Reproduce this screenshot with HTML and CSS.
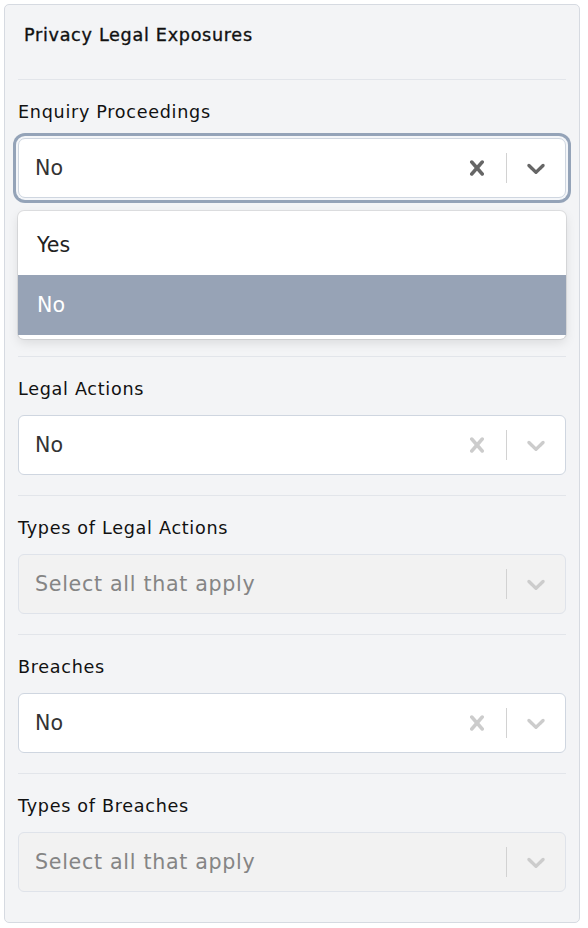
FILE: index.html
```html
<!DOCTYPE html>
<html lang="en">
<head>
<meta charset="utf-8">
<title>Privacy Legal Exposures</title>
<link rel="stylesheet" href="styles.css">
</head>
<body>
<div class="card">
  <div class="card-header">Privacy Legal Exposures</div>

  <div class="field field--open">
    <div class="label">Enquiry Proceedings</div>
    <div class="select select--focused">
      <div class="value">No</div>
      <div class="indicators">
        <span class="ind"><svg viewBox="0 0 20 20" class="icon"><path d="M14.348 14.849c-0.469 0.469-1.229 0.469-1.697 0l-2.651-3.030-2.651 3.029c-0.469 0.469-1.229 0.469-1.697 0-0.469-0.469-0.469-1.229 0-1.697l2.758-3.15-2.759-3.152c-0.469-0.469-0.469-1.228 0-1.697s1.228-0.469 1.697 0l2.652 3.031 2.651-3.031c0.469-0.469 1.228-0.469 1.697 0s0.469 1.229 0 1.697l-2.758 3.152 2.758 3.150c0.469 0.469 0.469 1.229 0 1.698z"/></svg></span>
        <span class="sep"></span>
        <span class="ind"><svg viewBox="0 0 20 20" class="icon"><path d="M4.516 7.548c0.436-0.446 1.043-0.481 1.576 0l3.908 3.747 3.908-3.747c0.533-0.481 1.141-0.446 1.574 0 0.436 0.445 0.408 1.197 0 1.615-0.406 0.418-4.695 4.502-4.695 4.502-0.217 0.223-0.502 0.335-0.787 0.335s-0.57-0.112-0.789-0.335c0 0-4.287-4.084-4.695-4.502s-0.436-1.170 0-1.615z"/></svg></span>
      </div>
    </div>
    <div class="menu">
      <div class="option">Yes</div>
      <div class="option option--selected">No</div>
    </div>
  </div>

  <div class="field">
    <div class="label">Legal Actions</div>
    <div class="select">
      <div class="value">No</div>
      <div class="indicators">
        <span class="ind"><svg viewBox="0 0 20 20" class="icon"><path d="M14.348 14.849c-0.469 0.469-1.229 0.469-1.697 0l-2.651-3.030-2.651 3.029c-0.469 0.469-1.229 0.469-1.697 0-0.469-0.469-0.469-1.229 0-1.697l2.758-3.15-2.759-3.152c-0.469-0.469-0.469-1.228 0-1.697s1.228-0.469 1.697 0l2.652 3.031 2.651-3.031c0.469-0.469 1.228-0.469 1.697 0s0.469 1.229 0 1.697l-2.758 3.152 2.758 3.150c0.469 0.469 0.469 1.229 0 1.698z"/></svg></span>
        <span class="sep"></span>
        <span class="ind"><svg viewBox="0 0 20 20" class="icon"><path d="M4.516 7.548c0.436-0.446 1.043-0.481 1.576 0l3.908 3.747 3.908-3.747c0.533-0.481 1.141-0.446 1.574 0 0.436 0.445 0.408 1.197 0 1.615-0.406 0.418-4.695 4.502-4.695 4.502-0.217 0.223-0.502 0.335-0.787 0.335s-0.57-0.112-0.789-0.335c0 0-4.287-4.084-4.695-4.502s-0.436-1.170 0-1.615z"/></svg></span>
      </div>
    </div>
  </div>

  <div class="field">
    <div class="label">Types of Legal Actions</div>
    <div class="select select--disabled">
      <div class="value placeholder">Select all that apply</div>
      <div class="indicators">
        <span class="sep"></span>
        <span class="ind"><svg viewBox="0 0 20 20" class="icon"><path d="M4.516 7.548c0.436-0.446 1.043-0.481 1.576 0l3.908 3.747 3.908-3.747c0.533-0.481 1.141-0.446 1.574 0 0.436 0.445 0.408 1.197 0 1.615-0.406 0.418-4.695 4.502-4.695 4.502-0.217 0.223-0.502 0.335-0.787 0.335s-0.57-0.112-0.789-0.335c0 0-4.287-4.084-4.695-4.502s-0.436-1.170 0-1.615z"/></svg></span>
      </div>
    </div>
  </div>

  <div class="field">
    <div class="label">Breaches</div>
    <div class="select">
      <div class="value">No</div>
      <div class="indicators">
        <span class="ind"><svg viewBox="0 0 20 20" class="icon"><path d="M14.348 14.849c-0.469 0.469-1.229 0.469-1.697 0l-2.651-3.030-2.651 3.029c-0.469 0.469-1.229 0.469-1.697 0-0.469-0.469-0.469-1.229 0-1.697l2.758-3.15-2.759-3.152c-0.469-0.469-0.469-1.228 0-1.697s1.228-0.469 1.697 0l2.652 3.031 2.651-3.031c0.469-0.469 1.228-0.469 1.697 0s0.469 1.229 0 1.697l-2.758 3.152 2.758 3.150c0.469 0.469 0.469 1.229 0 1.698z"/></svg></span>
        <span class="sep"></span>
        <span class="ind"><svg viewBox="0 0 20 20" class="icon"><path d="M4.516 7.548c0.436-0.446 1.043-0.481 1.576 0l3.908 3.747 3.908-3.747c0.533-0.481 1.141-0.446 1.574 0 0.436 0.445 0.408 1.197 0 1.615-0.406 0.418-4.695 4.502-4.695 4.502-0.217 0.223-0.502 0.335-0.787 0.335s-0.57-0.112-0.789-0.335c0 0-4.287-4.084-4.695-4.502s-0.436-1.170 0-1.615z"/></svg></span>
      </div>
    </div>
  </div>

  <div class="field field--last">
    <div class="label">Types of Breaches</div>
    <div class="select select--disabled">
      <div class="value placeholder">Select all that apply</div>
      <div class="indicators">
        <span class="sep"></span>
        <span class="ind"><svg viewBox="0 0 20 20" class="icon"><path d="M4.516 7.548c0.436-0.446 1.043-0.481 1.576 0l3.908 3.747 3.908-3.747c0.533-0.481 1.141-0.446 1.574 0 0.436 0.445 0.408 1.197 0 1.615-0.406 0.418-4.695 4.502-4.695 4.502-0.217 0.223-0.502 0.335-0.787 0.335s-0.57-0.112-0.789-0.335c0 0-4.287-4.084-4.695-4.502s-0.436-1.170 0-1.615z"/></svg></span>
      </div>
    </div>
  </div>
</div>
</body>
</html>
```

FILE: styles.css
```css
* { box-sizing: border-box; }

html, body {
  margin: 0;
  padding: 0;
  background: #ffffff;
}

body {
  font-family: "DejaVu Sans", "Open Sans", sans-serif;
  color: #111111;
}

.card {
  margin: 4px 8px 0 4px;
  width: 576px;
  height: 919px;
  background: #f3f4f6;
  border: 1px solid #d6dae1;
  border-radius: 5px;
  padding: 0 13px;
}

.card-header {
  padding: 17px 6px 31px;
  font-size: 17.6px;
  line-height: 26px;
  font-weight: 400;
  letter-spacing: 0.7px;
  -webkit-text-stroke: 0.35px #111;
  color: #111;
  border-bottom: 1px solid #e2e5ea;
}

.field {
  padding: 19px 0 20px;
  border-bottom: 1px solid #e2e5ea;
}

.field--open { padding-bottom: 17px; }

.field--last {
  border-bottom: none;
}

.label {
  font-size: 17.6px;
  line-height: 26px;
  letter-spacing: 0.7px;
  margin-bottom: 13px;
  color: #111;
}

.select {
  height: 60px;
  background: #ffffff;
  border: 1px solid #cfd6e0;
  border-radius: 6px;
  display: flex;
  align-items: center;
}

.select--focused {
  box-shadow: 0 0 0 2px #f4f6f9, 0 0 0 5px #94a3b8;
  border-radius: 7px;
}

.select--disabled {
  background: #f2f2f2;
  border-color: #dfe3ea;
}

.value {
  flex: 1;
  padding-left: 16px;
  font-size: 20.6px;
  color: #333333;
}

.placeholder {
  color: #858585;
  letter-spacing: 0.7px;
}

.indicators {
  display: flex;
  align-items: center;
  align-self: stretch;
}

.ind {
  width: 58px;
  display: flex;
  justify-content: center;
  align-items: center;
}

.icon {
  width: 30px;
  height: 30px;
  fill: #cccccc;
}

.select--focused .icon { fill: #666666; }

.sep {
  width: 1px;
  align-self: stretch;
  margin: 14px 0;
  background: #d2d2d2;
}

.menu {
  margin-top: 13px;
  background: #ffffff;
  border-radius: 6px;
  box-shadow: 0 0 0 1px rgba(0,0,0,0.08), 0 4px 11px rgba(0,0,0,0.1);
  padding: 4px 0;
}

.option {
  height: 60px;
  display: flex;
  align-items: center;
  padding-left: 19px;
  font-size: 20.6px;
  color: #222;
}

.option--selected {
  background: #97a3b6;
  color: #ffffff;
}
```
